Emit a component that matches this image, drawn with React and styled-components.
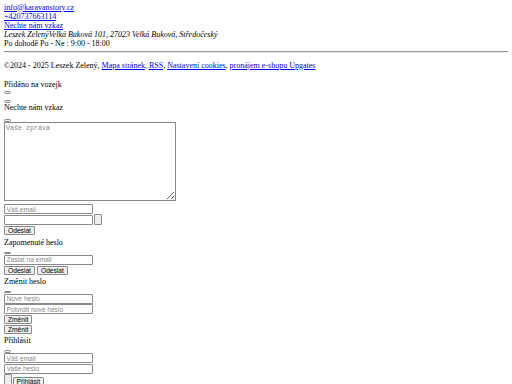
import styled, { createGlobalStyle } from "styled-components";

const GlobalStyle = createGlobalStyle`
    body {
        margin: 0;
        background: #fff;
        color: #000;
        font-family: "Liberation Serif", "Times New Roman", serif;
    }
`;

// the whole page is drawn at half size, like a 1024px page shrunk to 512px
const Page = styled.div`
    zoom: 0.5;
    padding: 5px 8px 8px;
    font-size: 16px;
    line-height: 18px;
    a {
        color: #0000ee;
    }
`;

const Address = styled.address`
    font-style: italic;
`;

const Rule = styled.hr`
    margin: 7px 0 0;
    border: none;
    border-top: 1px solid #9a9a9a;
    border-bottom: 1px solid #e4e4e4;
`;

const Footer = styled.p`
    margin: 15px 0 21px;
`;

const Note = styled.p`
    margin: 0;
`;

const Title = styled.div`
    line-height: 16px;
    margin-top: ${(p) => p.$top || 0}px;
`;

const Tiny = styled.button`
    display: block;
    width: 14px;
    height: 5px;
    padding: 0;
    margin-top: ${(p) => p.$top || 0}px;
    border: 1px solid #8a8a8a;
    border-radius: 3px;
    background: #efefef;
`;

const Message = styled.textarea`
    display: block;
    box-sizing: border-box;
    width: 344px;
    height: 159px;
    padding: 2px;
    margin: 0;
    font-family: "Liberation Mono", "Courier New", monospace;
    font-size: 13.33px;
    border: 1px solid #8a8a8a;
    resize: vertical;
    &::placeholder {
        color: #8a8a8a;
    }
`;

const Field = styled.input`
    display: block;
    box-sizing: border-box;
    width: 178px;
    height: 20px;
    padding: 1px 3px;
    margin: ${(p) => p.$top || 0}px 0 0;
    border: 1px solid #8a8a8a;
    border-radius: 2px;
    font-family: "Liberation Sans", Arial, sans-serif;
    font-size: 13.33px;
    &::placeholder {
        color: #8a8a8a;
    }
`;

const Row = styled.div`
    display: flex;
    align-items: flex-start;
    gap: ${(p) => p.$gap || 0}px;
    margin-top: ${(p) => p.$top || 0}px;
`;

const Action = styled.button`
    display: block;
    box-sizing: border-box;
    height: ${(p) => p.$h || 18}px;
    width: ${(p) => (p.$w ? `${p.$w}px` : "auto")};
    padding: 0 6px;
    margin-top: ${(p) => p.$top || 0}px;
    border: 1px solid #8a8a8a;
    border-radius: 2px;
    background: #efefef;
    font-family: "Liberation Sans", Arial, sans-serif;
    font-size: 13.33px;
    color: #000;
`;

const App = () => {
    return (
        <Page>
            <GlobalStyle />
            <div>
                <a href="#mail">info@karavanstory.cz</a>
                <br />
                <a href="#tel">+420737663114</a>
                <br />
                <a href="#vzkaz">Nechte nám vzkaz</a>
                <Address>
                    Leszek Zelený
                    <span>Velká Buková 101, 27023 Velká Buková, Středočeský</span>
                </Address>
                Po dohodě Po - Ne : 9:00 - 18:00
            </div>
            <Rule />
            <Footer>
                ©2024 - 2025 Leszek Zelený, <a href="#mapa">Mapa stránek</a>,{" "}
                <a href="#rss">RSS</a>, <a href="#cookies">Nastavení cookies</a>,{" "}
                <a href="#upgates">pronájem e-shopu Upgates</a>
            </Footer>
            <Note>Přidáno na vozejk</Note>
            <Tiny $top={4} />
            <Tiny $top={13} />
            <Title $top={3}>Nechte nám vzkaz</Title>
            <Tiny $top={14} />
            <Message placeholder="Vaše zpráva" />
            <Field $top={6} placeholder="Váš email" />
            <Row $gap={2} $top={2}>
                <Field />
                <Action $w={14} $h={22} $top={-3} />
            </Row>
            <Action $top={2}>Odeslat</Action>

            <Title $top={7}>Zapomenuté heslo</Title>
            <Tiny $top={10} />
            <Field $top={1} placeholder="Zaslat na email" />
            <Row $gap={4} $top={2}>
                <Action>Odeslat</Action>
                <Action>Odeslat</Action>
            </Row>

            <Title $top={7}>Změnit heslo</Title>
            <Tiny $top={9} />
            <Field $top={1} type="password" placeholder="Nové heslo" />
            <Field $top={1} type="password" placeholder="Potvrdit nové heslo" />
            <Action $top={2}>Změnit</Action>
            <Action $top={2}>Změnit</Action>

            <Title $top={5}>Přihlásit</Title>
            <Tiny $top={11} />
            <Field $top={1} placeholder="Váš email" />
            <Field $top={1} type="password" placeholder="Vaše heslo" />
            <Row $gap={1} $top={1}>
                <Action $w={15} $h={30} />
                <Action $top={6}>Přihlásit</Action>
            </Row>
        </Page>
    );
};

export default App;
